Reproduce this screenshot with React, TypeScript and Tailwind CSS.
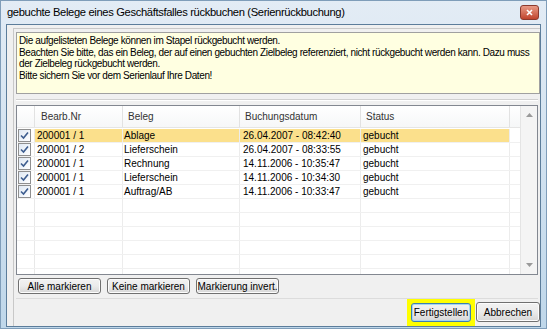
import React from "react";

const ROWS = [
  { nr: "200001 / 1", beleg: "Ablage", datum: "26.04.2007 - 08:42:40", status: "gebucht" },
  { nr: "200001 / 2", beleg: "Lieferschein", datum: "26.04.2007 - 08:33:55", status: "gebucht" },
  { nr: "200001 / 1", beleg: "Rechnung", datum: "14.11.2006 - 10:35:47", status: "gebucht" },
  { nr: "200001 / 1", beleg: "Lieferschein", datum: "14.11.2006 - 10:34:30", status: "gebucht" },
  { nr: "200001 / 1", beleg: "Auftrag/AB", datum: "14.11.2006 - 10:33:47", status: "gebucht" },
];

const EMPTY_ROWS = 5;

const CheckBox = () => (
  <div className="w-[13px] h-[13px] border border-[#8f8f8f] bg-gradient-to-br from-[#dfe8f3] to-[#ffffff] flex items-center justify-center">
    <svg width="9" height="9" viewBox="0 0 9 9">
      <path d="M1 4.5 L3.5 7 L8 1.5" fill="none" stroke="#3d5d8f" strokeWidth="1.6" />
    </svg>
  </div>
);

const WinButton: React.FC<{ label: string; className?: string; focused?: boolean }> = ({ label, className = "", focused }) => (
  <div
    className={`flex items-center justify-center rounded-[3px] border ${
      focused ? "border-[#3c7fb1] shadow-[inset_0_0_0_1px_#a6d6f0]" : "border-[#707070] shadow-[inset_0_0_0_1px_#fcfcfc]"
    } bg-gradient-to-b from-[#f2f2f2] via-[#ebebeb] to-[#d6d6d6] text-black ${className}`}
  >
    {label}
  </div>
);

export default function App() {
  return (
    <div
      className="w-[547px] h-[329px] flex flex-col bg-gradient-to-b from-[#e3ecf5] to-[#bfd7ea] border border-[#7f9db9] overflow-hidden"
      style={{ fontFamily: '"Liberation Sans", Arial, sans-serif' }}
    >
      {/* Title bar */}
      <div className="h-[23px] shrink-0 flex items-center justify-between pl-[6px] pr-[7px]">
        <span className="text-[11.2px] text-black tracking-[-0.35px]">
          gebuchte Belege eines Geschäftsfalles rückbuchen (Serienrückbuchung)
        </span>
        <div className="w-[19px] h-[15px] rounded-[3px] border border-[#8b3a2e] bg-gradient-to-b from-[#e89a86] to-[#c0432c] flex items-center justify-center">
          <svg width="7" height="7" viewBox="0 0 7 7">
            <path d="M1 1 L6 6 M6 1 L1 6" stroke="#fff" strokeWidth="1.6" />
          </svg>
        </div>
      </div>

      {/* Client area */}
      <div className="flex-1 mx-[5px] mb-[6px] bg-[#f0f0f0] border border-[#5c7d9b] flex flex-col text-[10px] text-black">
        <div className="flex-1 flex flex-col ml-[6px] mt-[3px] border-l border-t border-[#c8c8c8] pl-[2px] pt-[3px]">
          {/* Info box */}
          <div className="h-[62px] bg-[#ffffe1] border border-[#a0a0a0] px-[2px] pt-[2px] leading-[11.5px] tracking-[-0.38px] whitespace-nowrap overflow-hidden">
            <div>Die aufgelisteten Belege können im Stapel rückgebucht werden.</div>
            <div>Beachten Sie bitte, das ein Beleg, der auf einen gebuchten Zielbeleg referenziert, nicht rückgebucht werden kann. Dazu muss</div>
            <div>der Zielbeleg rückgebucht werden.</div>
            <div>Bitte sichern Sie vor dem Serienlauf Ihre Daten!</div>
          </div>

          {/* Separator */}
          <div className="mt-[5px] mr-[2px] h-[2px] border-t border-[#d0d0d0] border-b border-b-white" />

          {/* List */}
          <div className="mt-[4px] mr-[2px] h-[170px] bg-white border border-[#828790] flex overflow-hidden">
            <div className="flex-1 flex flex-col">
              <div className="h-[22px] shrink-0 flex border-b border-[#e5e5e5] bg-gradient-to-b from-[#ffffff] to-[#f6f7f8] text-[#333]">
                <div className="w-[18px] border-r border-[#e2e2e2]" />
                <div className="w-[88px] border-r border-[#e2e2e2] pl-[6px] flex items-center">Bearb.Nr</div>
                <div className="w-[117px] border-r border-[#e2e2e2] pl-[5px] flex items-center">Beleg</div>
                <div className="w-[121px] border-r border-[#e2e2e2] pl-[5px] flex items-center">Buchungsdatum</div>
                <div className="w-[149px] border-r border-[#e2e2e2] pl-[5px] flex items-center">Status</div>
              </div>
              <div className="h-[1px] shrink-0" />
              {ROWS.map((r, i) => (
                <div key={i} className="h-[14px] shrink-0 flex border-b border-[#f0f0f0]">
                  <div className="w-[18px] border-r border-[#e8e8e8] flex items-center pl-[1px]">
                    <CheckBox />
                  </div>
                  <div className={`w-[475px] flex ${i === 0 ? "bg-[#fbe08c]" : ""}`}>
                    <div className="w-[88px] border-r border-[#ececec] pl-[2px] flex items-center">{r.nr}</div>
                    <div className="w-[117px] border-r border-[#ececec] pl-[1px] flex items-center">{r.beleg}</div>
                    <div className="w-[121px] border-r border-[#ececec] pl-[3px] flex items-center">{r.datum}</div>
                    <div className="w-[149px] border-r border-[#ececec] pl-[2px] flex items-center">{r.status}</div>
                  </div>
                </div>
              ))}
              {Array.from({ length: EMPTY_ROWS + 1 }).map((_, i) => (
                <div key={i} className="h-[14px] shrink-0 flex border-b border-[#f0f0f0]">
                  <div className="w-[18px] border-r border-[#e8e8e8]" />
                  <div className="w-[88px] border-r border-[#ececec]" />
                  <div className="w-[117px] border-r border-[#ececec]" />
                  <div className="w-[121px] border-r border-[#ececec]" />
                  <div className="w-[149px] border-r border-[#ececec]" />
                </div>
              ))}
            </div>
            {/* Scrollbar */}
            <div className="w-[17px] bg-[#f4f4f4] border-l border-[#e4e4e4] flex flex-col justify-between items-center py-[7px]">
              <svg width="7" height="4" viewBox="0 0 7 4">
                <path d="M0 4 L3.5 0 L7 4 Z" fill="#9a9a9a" />
              </svg>
              <svg width="7" height="4" viewBox="0 0 7 4">
                <path d="M0 0 L3.5 4 L7 0 Z" fill="#9a9a9a" />
              </svg>
            </div>
          </div>

          {/* Marker buttons */}
          <div className="mt-[3px] flex gap-[6px] pl-[2px]">
            <WinButton label="Alle markieren" className="w-[83px] h-[16px]" />
            <WinButton label="Keine markieren" className="w-[83px] h-[16px]" />
            <WinButton label="Markierung invert." className="w-[83px] h-[16px]" />
          </div>

          <div className="mt-[4px] mr-[2px] border-t border-[#dcdcdc]" />

          {/* Dialog buttons */}
          <div className="flex-1 flex items-start justify-end gap-[1px]">
            <div className="border-[3px] border-[#ffff00] p-[1px] bg-[#ffff00]">
              <WinButton label="Fertigstellen" focused className="w-[60px] h-[19px]" />
            </div>
            <WinButton label="Abbrechen" className="w-[64px] h-[20px] mt-[3px]" />
          </div>
        </div>
      </div>
    </div>
  );
}
